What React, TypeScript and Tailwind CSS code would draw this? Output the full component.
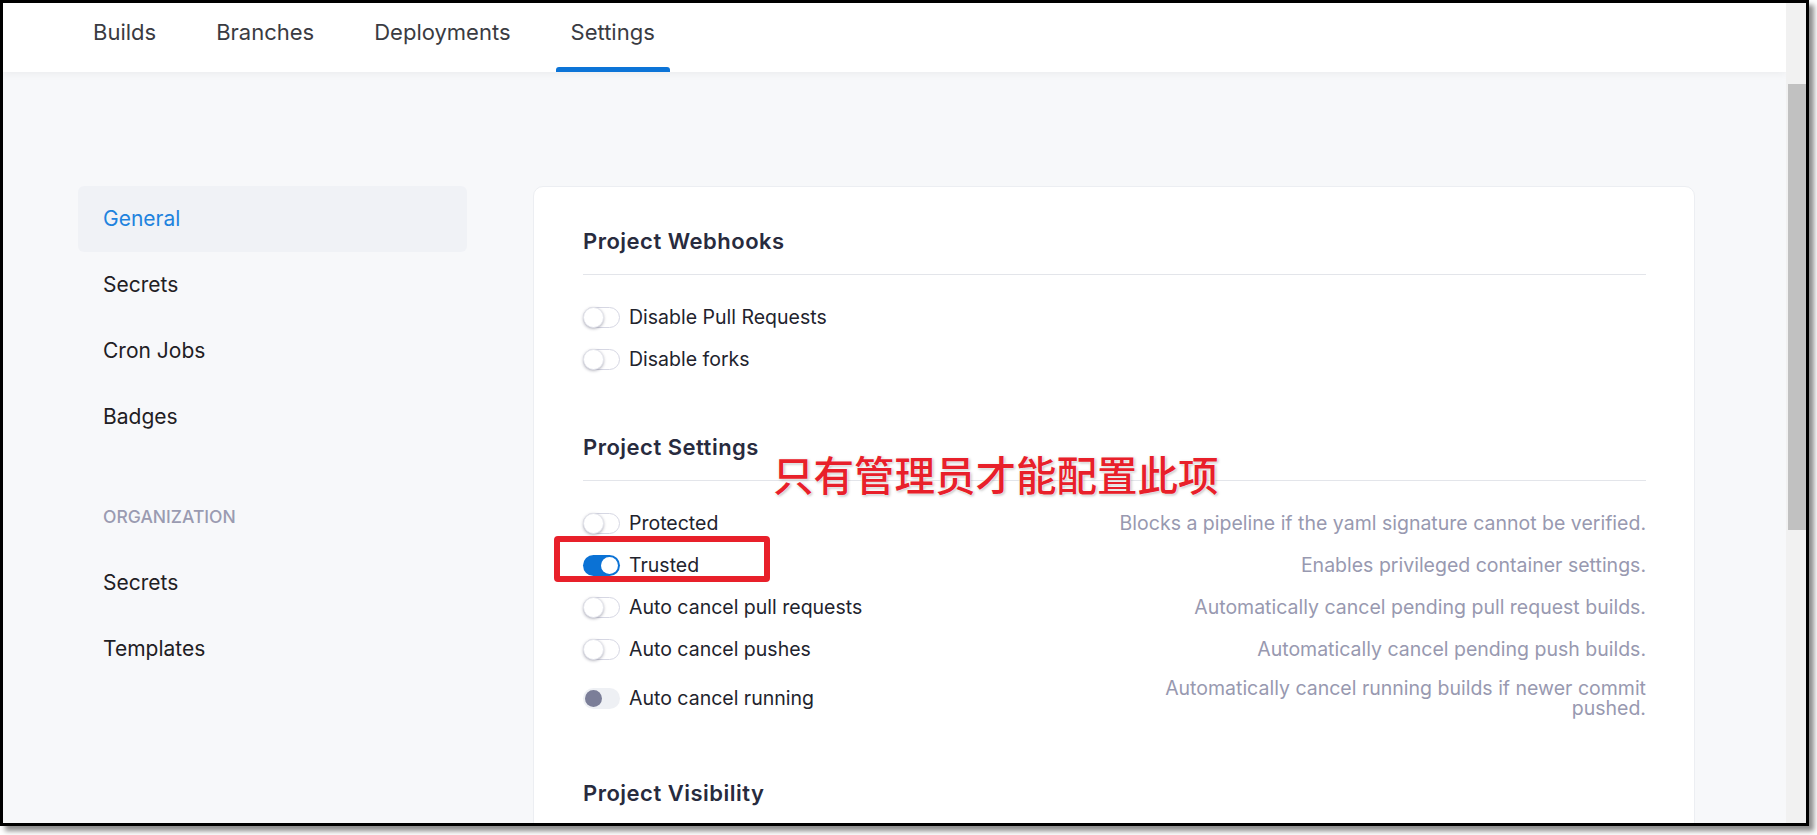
import React from "react";

type ToggleState = "off" | "on" | "disabled";

interface SettingRow {
  label: string;
  state: ToggleState;
  description?: string;
}

const NAV_TABS = ["Builds", "Branches", "Deployments", "Settings"];

const WEBHOOK_ROWS: SettingRow[] = [
  { label: "Disable Pull Requests", state: "off" },
  { label: "Disable forks", state: "off" },
];

const PROJECT_ROWS: SettingRow[] = [
  {
    label: "Protected",
    state: "off",
    description: "Blocks a pipeline if the yaml signature cannot be verified.",
  },
  {
    label: "Trusted",
    state: "on",
    description: "Enables privileged container settings.",
  },
  {
    label: "Auto cancel pull requests",
    state: "off",
    description: "Automatically cancel pending pull request builds.",
  },
  {
    label: "Auto cancel pushes",
    state: "off",
    description: "Automatically cancel pending push builds.",
  },
  {
    label: "Auto cancel running",
    state: "disabled",
    description:
      "Automatically cancel running builds if newer commit pushed.",
  },
];

function Toggle({ state }: { state: ToggleState }) {
  if (state === "on") {
    return (
      <span className="flex h-[21px] w-[37px] shrink-0 items-center justify-end rounded-full bg-[#0b72d5] px-[2px]">
        <span className="h-[17px] w-[17px] rounded-full bg-white" />
      </span>
    );
  }
  if (state === "disabled") {
    return (
      <span className="flex h-[21px] w-[37px] shrink-0 items-center rounded-full bg-[#eef0f4] px-[2px]">
        <span className="h-[17px] w-[17px] rounded-full bg-[#7b7e98]" />
      </span>
    );
  }
  return (
    <span className="flex h-[21px] w-[37px] shrink-0 items-center rounded-full border border-[#d6d7e3] bg-white">
      <span className="-ml-px h-[21px] w-[21px] rounded-full border border-[#e4e5ec] bg-white shadow-[0_1px_3px_rgba(40,40,70,0.35)]" />
    </span>
  );
}

function Section({
  title,
  rows,
  className = "",
}: {
  title: string;
  rows: SettingRow[];
  className?: string;
}) {
  return (
    <section className={className}>
      <h3 className="border-b border-[#e3e5ea] pb-[19px] text-[22px] font-semibold leading-[28px] tracking-[0.5px] text-[#282b3e]">
        {title}
      </h3>
      <div className="pt-[21px]">
        {rows.map((row) => (
          <div
            key={row.label}
            className="flex min-h-[42px] items-center justify-between py-2"
          >
            <div className="flex items-center gap-[9px]">
              <Toggle state={row.state} />
              <span className="text-[19.5px] leading-[26px] text-[#22232d]">
                {row.label}
              </span>
            </div>
            {row.description && (
              <p className="max-w-[540px] text-right text-[19.5px] leading-[20px] text-[#9899b0]">
                {row.description}
              </p>
            )}
          </div>
        ))}
      </div>
    </section>
  );
}

export default function App() {
  return (
    <div className="h-[835px] w-[1817px] overflow-hidden bg-white font-['Inter',sans-serif]">
      <div className="flex h-[826px] w-[1809px] border-[3px] border-black shadow-[5px_5px_5px_rgba(0,0,0,0.45)]">
        {/* Page */}
        <div className="flex flex-1 flex-col overflow-hidden bg-[#f7f8fa]">
          <header className="relative z-10 flex h-[69px] shrink-0 bg-white pl-[75px] shadow-[0_2px_8px_rgba(0,0,0,0.05)]">
            <nav className="flex h-full gap-[30px]">
              {NAV_TABS.map((tab) => {
                const active = tab === "Settings";
                return (
                  <div key={tab} className="flex h-full flex-col">
                    <span className="flex flex-1 items-center px-[15px] pb-[5px] text-[22px] text-[#3a3b42]">
                      {tab}
                    </span>
                    <span
                      className={`h-[5px] rounded-t-[3px] ${
                        active ? "bg-[#0c74d7]" : "bg-transparent"
                      }`}
                    />
                  </div>
                );
              })}
            </nav>
          </header>

          <main className="flex pl-[75px] pt-[114px]">
            {/* Left: settings menu */}
            <aside className="flex w-[389px] shrink-0 flex-col">
              <div className="flex h-[66px] items-center rounded-md bg-[#f0f2f6] pl-[25px] text-[21px] text-[#1f83de]">
                General
              </div>
              {["Secrets", "Cron Jobs", "Badges"].map((item) => (
                <div
                  key={item}
                  className="flex h-[66px] items-center pl-[25px] text-[21px] text-[#1f2024]"
                >
                  {item}
                </div>
              ))}
              <div className="mt-[34px] flex h-[66px] items-center pl-[25px] text-[17.5px] font-medium text-[#9a9bb1]">
                ORGANIZATION
              </div>
              {["Secrets", "Templates"].map((item) => (
                <div
                  key={item}
                  className="flex h-[66px] items-center pl-[25px] text-[21px] text-[#1f2024]"
                >
                  {item}
                </div>
              ))}
            </aside>

            {/* Right: settings card */}
            <div className="relative ml-[66px] w-[1162px] shrink-0 rounded-[10px] border border-[#eceef2] bg-white pb-[80px] pl-[49px] pr-[48px] pt-[40px]">
              <Section
                title="Project Webhooks"
                rows={WEBHOOK_ROWS}
                className="mb-[53px]"
              />
              <Section
                title="Project Settings"
                rows={PROJECT_ROWS}
                className="mb-[53px]"
              />
              <h3 className="text-[22px] font-semibold leading-[28px] tracking-[0.5px] text-[#282b3e]">
                Project Visibility
              </h3>

              {/* annotation */}
              <div className="absolute left-[239px] top-[267px] font-['Noto_Sans_CJK_SC',sans-serif] text-[40.5px] font-medium leading-[40px] text-[#e8202a] [text-shadow:0_0_2px_#fff,0_0_2px_#fff,1px_1px_3px_rgba(0,0,0,0.35)]">
                只有管理员才能配置此项
              </div>
              <div className="absolute left-[20px] top-[349px] h-[46px] w-[216px] rounded-[4px] border-[6px] border-[#e8202a]" />
            </div>
          </main>
        </div>

        {/* Scrollbar */}
        <div className="flex w-[20px] shrink-0 flex-col bg-[#f1f1f1] pl-[2px]">
          <div className="h-[81px]" />
          <div className="h-[446px] bg-[#c1c1c1]" />
        </div>
      </div>
    </div>
  );
}
